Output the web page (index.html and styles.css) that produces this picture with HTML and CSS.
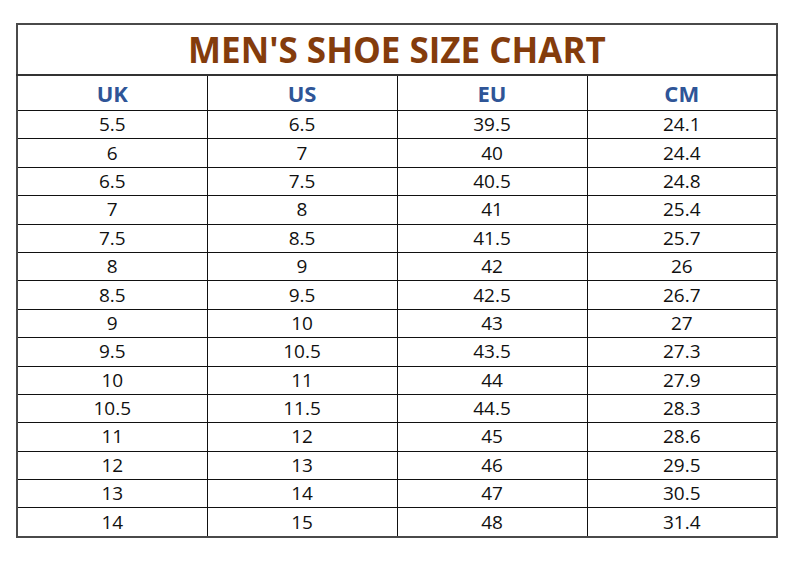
FILE: index.html
```html
<!DOCTYPE html>
<html>
<head>
<meta charset="utf-8">
<link rel="stylesheet" href="styles.css">
</head>
<body>
<table class="chart">
  <thead>
    <tr class="title-row"><th colspan="4" class="title">MEN'S SHOE SIZE CHART</th></tr>
    <tr class="head-row"><th>UK</th><th>US</th><th>EU</th><th>CM</th></tr>
  </thead>
  <tbody>
    <tr><td>5.5</td><td>6.5</td><td>39.5</td><td>24.1</td></tr>
    <tr><td>6</td><td>7</td><td>40</td><td>24.4</td></tr>
    <tr><td>6.5</td><td>7.5</td><td>40.5</td><td>24.8</td></tr>
    <tr><td>7</td><td>8</td><td>41</td><td>25.4</td></tr>
    <tr><td>7.5</td><td>8.5</td><td>41.5</td><td>25.7</td></tr>
    <tr><td>8</td><td>9</td><td>42</td><td>26</td></tr>
    <tr><td>8.5</td><td>9.5</td><td>42.5</td><td>26.7</td></tr>
    <tr><td>9</td><td>10</td><td>43</td><td>27</td></tr>
    <tr><td>9.5</td><td>10.5</td><td>43.5</td><td>27.3</td></tr>
    <tr><td>10</td><td>11</td><td>44</td><td>27.9</td></tr>
    <tr><td>10.5</td><td>11.5</td><td>44.5</td><td>28.3</td></tr>
    <tr><td>11</td><td>12</td><td>45</td><td>28.6</td></tr>
    <tr><td>12</td><td>13</td><td>46</td><td>29.5</td></tr>
    <tr><td>13</td><td>14</td><td>47</td><td>30.5</td></tr>
    <tr><td>14</td><td>15</td><td>48</td><td>31.4</td></tr>
  </tbody>
</table>
</body>
</html>
```
FILE: styles.css
```css
html, body {
  margin: 0;
  padding: 0;
  background: #ffffff;
}
body {
  padding: 23px 0 0 16px;
  font-family: "Open Sans", "Liberation Sans", sans-serif;
  color: #111111;
}
.chart {
  width: 762px;
  border-collapse: collapse;
  table-layout: fixed;
  border: 2px solid #4a4a4a;
}
.chart th,
.chart td {
  border: 1px solid #111111;
  text-align: center;
  padding: 0;
}
.title-row th {
  height: 49px;
  font-size: 35px;
  font-weight: 700;
  color: #843c0c;
  border-bottom: 2px solid #333333;
  line-height: 1;
}
.head-row th {
  height: 34px;
  font-size: 22px;
  font-weight: 700;
  color: #2f5597;
  line-height: 1;
}
.chart tbody td {
  height: 27.4px;
  font-size: 19px;
  line-height: 1;
}
```
